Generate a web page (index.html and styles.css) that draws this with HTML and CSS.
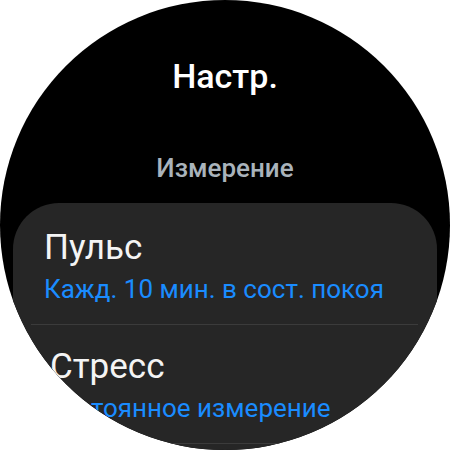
FILE: index.html
```html
<!DOCTYPE html>
<html lang="ru">
<head>
<meta charset="utf-8">
<title>Настр.</title>
<link rel="stylesheet" href="styles.css">
</head>
<body>
<div class="watch">
  <h1 class="title">Настр.</h1>
  <div class="section">Измерение</div>
  <div class="card">
    <div class="item">
      <div class="item-title">Пульс</div>
      <div class="item-sub">Кажд. 10 мин. в сост. покоя</div>
    </div>
    <div class="item">
      <div class="item-title item-title-shift">Стресс</div>
      <div class="item-sub">Постоянное измерение</div>
    </div>
  </div>
</div>
</body>
</html>
```

FILE: styles.css
```css
html, body {
  margin: 0;
  padding: 0;
  background: #ffffff;
}
body {
  width: 450px;
  height: 450px;
  overflow: hidden;
  font-family: Roboto, "Noto Sans", sans-serif;
}
.watch {
  width: 450px;
  height: 450px;
  border-radius: 50%;
  background: #000000;
  overflow: hidden;
  display: flex;
  flex-direction: column;
  align-items: center;
  padding-top: 56px;
  box-sizing: border-box;
}
.title {
  margin: 0;
  font-size: 34px;
  line-height: 40px;
  font-weight: 500;
  color: #ffffff;
}
.section {
  margin-top: 57px;
  font-size: 26px;
  line-height: 30px;
  font-weight: 500;
  color: #a9b3bb;
}
.card {
  align-self: stretch;
  margin: 20px 13px 0 13px;
  padding-top: 3px;
  background: #262626;
  border-radius: 46px;
  flex: 1 0 auto;
}
.item {
  margin: 0 19px 0 18px;
  padding: 22px 0 20px 13px;
  border-bottom: 1px solid #3b3b3b;
  display: flex;
  flex-direction: column;
  gap: 6px;
}
.item-title {
  font-size: 35px;
  line-height: 40px;
  color: #f4f4f4;
}
.item-title-shift {
  padding-left: 6px;
}
.item-sub {
  font-size: 26px;
  line-height: 30px;
  color: #1a8cff;
}
```
